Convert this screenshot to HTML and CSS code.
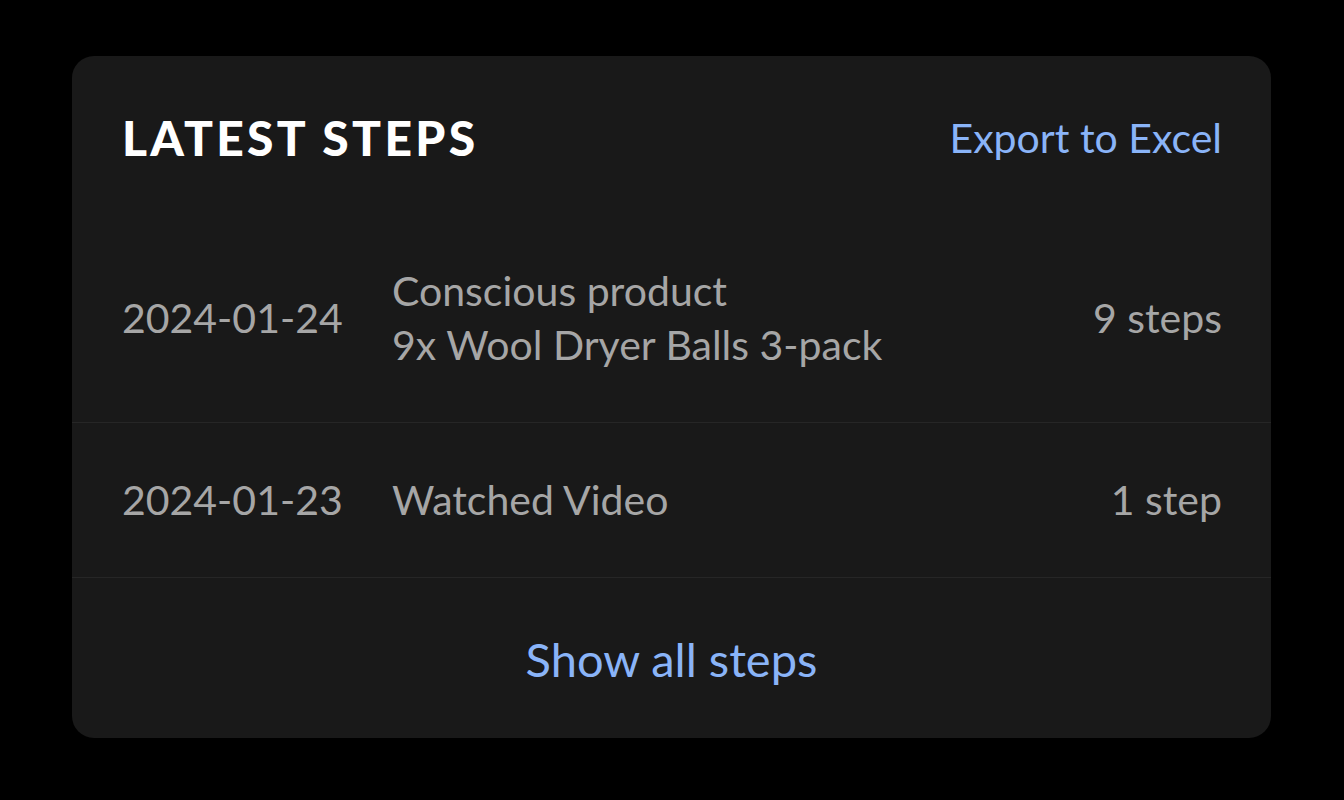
FILE: index.html
```html
<!DOCTYPE html>
<html lang="en">
<head>
    <meta charset="UTF-8">
    <meta name="viewport" content="width=device-width, initial-scale=1.0">
    <title>Latest Steps</title>
    <link rel="stylesheet" href="styles.css">
</head>
<body>
    <div class="card">
        <div class="card-header">
            <h2>LATEST STEPS</h2>
            <a class="link" href="#">Export to Excel</a>
        </div>

        <div class="step-row">
            <div class="step-date">2024-01-24</div>
            <div class="step-desc">
                <div>Conscious product</div>
                <div>9x Wool Dryer Balls 3-pack</div>
            </div>
            <div class="step-count">9 steps</div>
        </div>

        <div class="step-row">
            <div class="step-date">2024-01-23</div>
            <div class="step-desc">
                <div>Watched Video</div>
            </div>
            <div class="step-count">1 step</div>
        </div>

        <div class="card-footer">
            <a class="link" href="#">Show all steps</a>
        </div>
    </div>
</body>
</html>
```

FILE: styles.css
```css
body {
    font-family: Lato, "Open Sans", sans-serif;
    background-color: #000;
    color: #a6a6a6;
    margin: 0;
    padding: 56px 72px 0 72px;
}

.card {
    background-color: #191919;
    border-radius: 22px;
    width: 1199px;
    height: 682px;
}

.card-header {
    display: flex;
    justify-content: space-between;
    align-items: center;
    padding: 51px 49px 0 50px;
    height: 60px;
    margin-bottom: 47px;
}

.card-header h2 {
    margin: 0;
    color: #fff;
    font-size: 48px;
    font-weight: 900;
    letter-spacing: 3.3px;
}

.link {
    color: #8ab4f8;
    text-decoration: none;
    font-size: 41px;
}

.step-row {
    display: flex;
    align-items: center;
    padding: 50px 49px 50px 50px;
    border-bottom: 1px solid #262626;
    font-size: 41px;
    line-height: 54px;
}

.step-row:last-of-type {
    padding-top: 49px;
}

.step-date {
    width: 270px;
}

.step-desc {
    flex: 1;
}

.step-count {
    text-align: right;
}

.card-footer {
    display: flex;
    justify-content: center;
    align-items: center;
    height: 161px;
}

.card-footer .link {
    font-size: 47px;
}
```
